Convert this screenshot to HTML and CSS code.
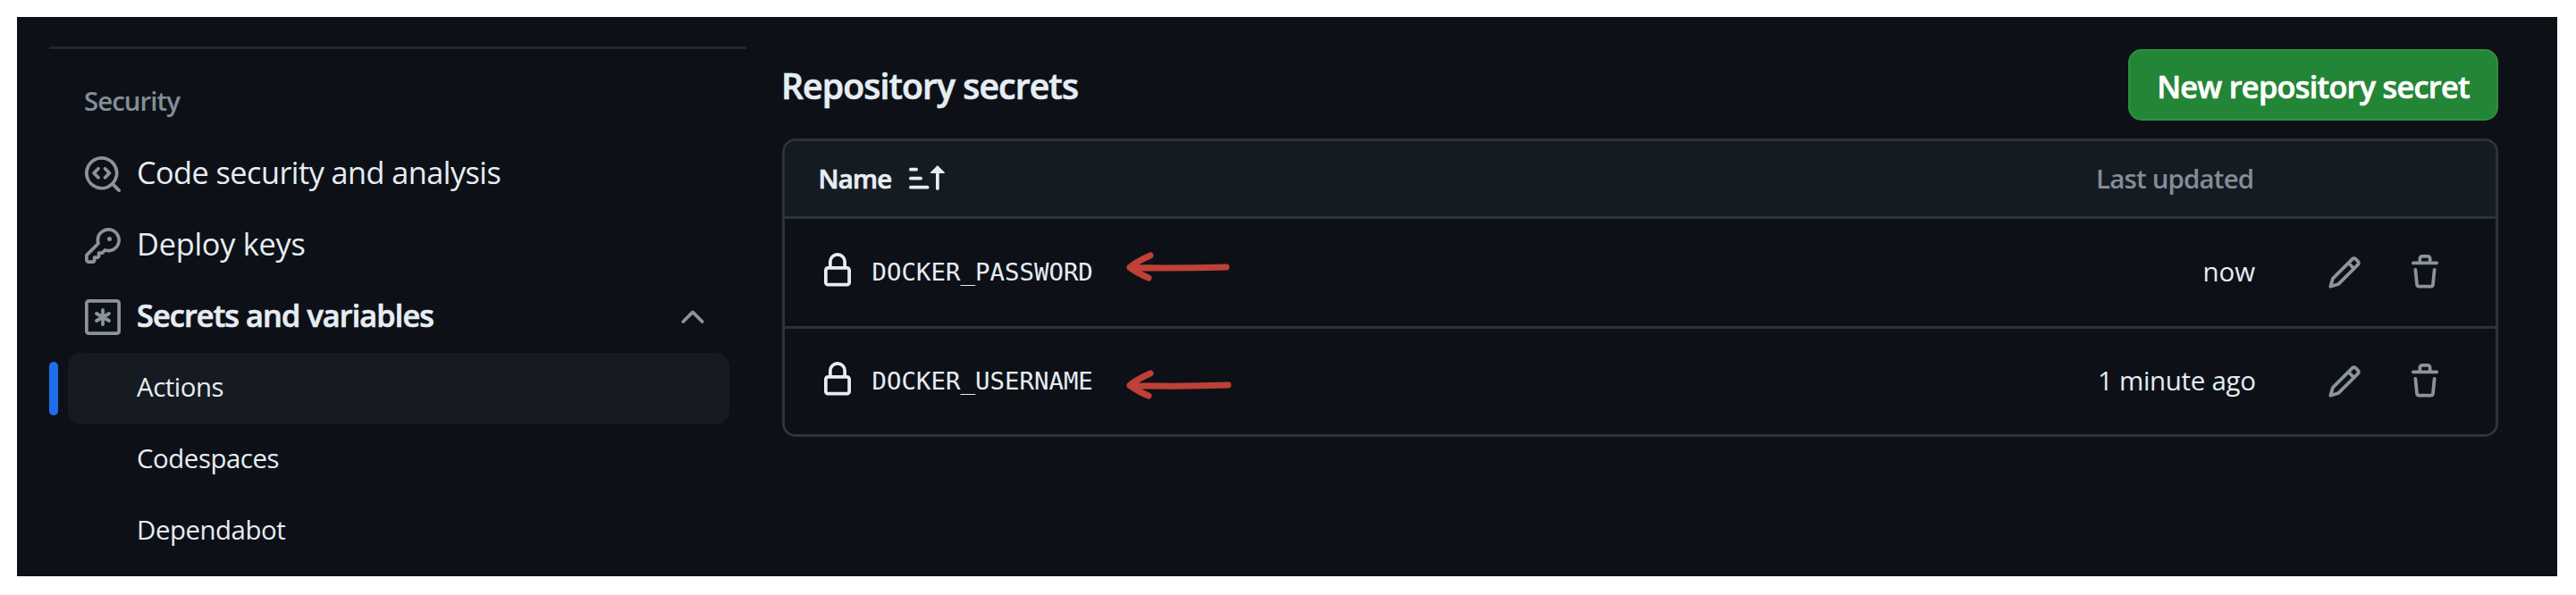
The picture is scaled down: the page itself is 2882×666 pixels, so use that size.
FILE: index.html
```html
<!DOCTYPE html>
<html lang="en">
<head>
<meta charset="utf-8">
<title>Actions secrets</title>
<link rel="stylesheet" href="styles.css">
</head>
<body>
<svg class="sprite" aria-hidden="true">
  <symbol id="codescan" viewBox="0 0 16 16"><path d="M8.47 4.97a.75.75 0 0 0 0 1.06L9.94 7.5 8.47 8.97a.75.75 0 1 0 1.06 1.06l2-2a.75.75 0 0 0 0-1.06l-2-2a.75.75 0 0 0-1.06 0ZM6.53 6.03a.75.75 0 0 0-1.06-1.06l-2 2a.75.75 0 0 0 0 1.06l2 2a.75.75 0 1 0 1.06-1.06L5.06 7.5l1.47-1.47Z"/><path d="M12.246 13.307a7.501 7.501 0 1 1 1.06-1.06l2.474 2.473a.749.749 0 1 1-1.06 1.06l-2.474-2.473ZM1.5 7.5a6.002 6.002 0 0 0 3.608 5.504 6.002 6.002 0 0 0 6.486-1.117.748.748 0 0 1 .292-.293A6 6 0 1 0 1.5 7.5Z"/></symbol>
  <symbol id="key" viewBox="0 0 16 16"><path d="M10.5 0a5.499 5.499 0 1 1-1.288 10.848l-.932.932a.749.749 0 0 1-.53.22H7v.75a.749.749 0 0 1-.22.53l-.5.5a.749.749 0 0 1-.53.22H5v.75a.749.749 0 0 1-.22.53l-.5.5a.749.749 0 0 1-.53.22h-2A1.75 1.75 0 0 1 0 14.25v-2c0-.199.079-.389.22-.53l4.932-4.932A5.5 5.5 0 0 1 10.5 0Zm-4 5.5c-.001.431.069.86.205 1.269a.75.75 0 0 1-.181.768L1.5 12.56v1.69c0 .138.112.25.25.25h1.69l.06-.06v-1.19a.75.75 0 0 1 .75-.75h1.19l.06-.06v-1.19a.75.75 0 0 1 .75-.75h1.19l1.023-1.025a.75.75 0 0 1 .768-.18A4 4 0 1 0 6.5 5.5ZM11 6a1 1 0 1 1 0-2 1 1 0 0 1 0 2Z"/></symbol>
  <symbol id="asterisk" viewBox="0 0 16 16"><g fill="none" stroke="currentColor" stroke-width="1.5"><rect x=".75" y=".75" width="14.5" height="14.5" rx="1"/><path stroke-linecap="round" d="M8 4.75v6.5M5.2 6.4l5.6 3.2M10.8 6.4 5.2 9.6"/></g></symbol>
  <symbol id="chevron" viewBox="0 0 16 16"><path d="M3.22 10.53a.749.749 0 0 1 0-1.06l4.25-4.25a.749.749 0 0 1 1.06 0l4.25 4.25a.749.749 0 1 1-1.06 1.06L8 6.811 4.28 10.53a.749.749 0 0 1-1.06 0Z"/></symbol>
  <symbol id="sort" viewBox="0 0 16 16"><path d="m12.927 2.573 3 3A.25.25 0 0 1 15.75 6H13.5v6.75a.75.75 0 0 1-1.5 0V6H9.75a.25.25 0 0 1-.177-.427l3-3a.25.25 0 0 1 .354 0ZM0 12.25a.75.75 0 0 1 .75-.75h7.5a.75.75 0 0 1 0 1.5H.75a.75.75 0 0 1-.75-.75Zm0-4a.75.75 0 0 1 .75-.75h4.5a.75.75 0 0 1 0 1.5H.75A.75.75 0 0 1 0 8.25Zm0-4a.75.75 0 0 1 .75-.75h2.5a.75.75 0 0 1 0 1.5H.75A.75.75 0 0 1 0 4.25Z"/></symbol>
  <symbol id="lock" viewBox="0 0 16 16"><path d="M4 4a4 4 0 0 1 8 0v2h.25c.966 0 1.75.784 1.75 1.75v5.5A1.75 1.75 0 0 1 12.25 15h-8.5A1.75 1.75 0 0 1 2 13.25v-5.5C2 6.784 2.784 6 3.75 6H4Zm8.25 3.5h-8.5a.25.25 0 0 0-.25.25v5.5c0 .138.112.25.25.25h8.5a.25.25 0 0 0 .25-.25v-5.5a.25.25 0 0 0-.25-.25ZM10.5 6V4a2.5 2.5 0 1 0-5 0v2Z"/></symbol>
  <symbol id="pencil" viewBox="0 0 16 16"><path d="M11.013 1.427a1.75 1.75 0 0 1 2.474 0l1.086 1.086a1.75 1.75 0 0 1 0 2.474l-8.61 8.61c-.21.21-.47.364-.756.445l-3.251.93a.75.75 0 0 1-.927-.928l.929-3.25c.081-.286.235-.547.445-.758l8.61-8.61Zm.176 4.823L9.75 4.81l-6.286 6.287a.253.253 0 0 0-.064.108l-.558 1.953 1.953-.558a.253.253 0 0 0 .108-.064Zm1.238-3.763a.25.25 0 0 0-.354 0L10.811 3.75l1.439 1.44 1.263-1.263a.25.25 0 0 0 0-.354Z"/></symbol>
  <symbol id="trash" viewBox="0 0 16 16"><path d="M11 1.75V3h2.25a.75.75 0 0 1 0 1.5H2.75a.75.75 0 0 1 0-1.5H5V1.75C5 .784 5.784 0 6.75 0h2.5C10.216 0 11 .784 11 1.75ZM4.496 6.675l.66 6.6a.25.25 0 0 0 .249.225h5.19a.25.25 0 0 0 .249-.225l.66-6.6a.75.75 0 0 1 1.492.149l-.66 6.6A1.748 1.748 0 0 1 10.595 15h-5.19a1.75 1.75 0 0 1-1.741-1.575l-.66-6.6a.75.75 0 1 1 1.492-.15ZM6.5 1.75V3h3V1.75a.25.25 0 0 0-.25-.25h-2.5a.25.25 0 0 0-.25.25Z"/></symbol>
</svg>
<div class="panel">
  <nav class="sidebar">
    <h3 class="group-title">Security</h3>
    <a class="item"><svg class="icon"><use href="#codescan"/></svg><span class="label codesec">Code security and analysis</span></a>
    <a class="item"><svg class="icon"><use href="#key"/></svg><span class="label deploy">Deploy keys</span></a>
    <a class="item open"><svg class="icon"><use href="#asterisk"/></svg><span class="label">Secrets and variables</span><svg class="icon"><use href="#chevron"/></svg></a>
    <a class="item sub current"><span class="label">Actions</span></a>
    <a class="item sub"><span class="label">Codespaces</span></a>
    <a class="item sub"><span class="label">Dependabot</span></a>
  </nav>
  <main class="main">
    <header class="head">
      <h2 class="title">Repository secrets</h2>
      <button class="new">New repository secret</button>
    </header>
    <section class="table">
      <div class="row thead">
        <span class="name">Name</span><svg class="icon sort"><use href="#sort"/></svg>
        <span class="time updated">Last updated</span>
      </div>
      <div class="row">
        <svg class="icon lock"><use href="#lock"/></svg><code class="secret">DOCKER_PASSWORD</code>
        <svg class="arrow" viewBox="0 0 124 40"><path d="M30 9Q12 17 7 22.5Q12 27 28 34M7 22.5Q50 23.5 115 22"/></svg>
        <span class="time now">now</span>
        <svg class="icon edit"><use href="#pencil"/></svg><svg class="icon del"><use href="#trash"/></svg>
      </div>
      <div class="row">
        <svg class="icon lock"><use href="#lock"/></svg><code class="secret">DOCKER_USERNAME</code>
        <svg class="arrow lower" viewBox="0 0 124 40"><path d="M30 9Q12 17 7 22.5Q12 27 28 34M7 22.5Q60 24 117 22"/></svg>
        <span class="time">1 minute ago</span>
        <svg class="icon edit"><use href="#pencil"/></svg><svg class="icon del"><use href="#trash"/></svg>
      </div>
    </section>
  </main>
</div>
</body>
</html>
```
FILE: styles.css
```css
* { box-sizing: border-box; }

body {
  margin: 0;
  padding: 19px 21px 21px 19px;
  background: #fff;
  font-family: "Open Sans", "Noto Sans", sans-serif;
  color: #e6edf3;
}

.sprite { display: none; }

.panel {
  display: flex;
  gap: 40px;
  height: 626px;
  padding: 33px 66px 0 36px;
  background: #0d1117;
}

.icon {
  flex: none;
  width: 40px;
  height: 40px;
  fill: currentColor;
  color: #8b949e;
}

/* Sidebar */
.sidebar {
  width: 780px;
  border-top: 3px solid #20262d;
}

.group-title {
  margin: 0;
  height: 100px;
  padding: 38px 0 0 39px;
  font-size: 29.4px;
  line-height: 40px;
  font-weight: 600;
  letter-spacing: -.94px;
  color: #848d97;
}

.item {
  position: relative;
  display: flex;
  align-items: center;
  gap: 18px;
  width: 740px;
  height: 80px;
  margin: 0 0 0 20.5px;
  padding: 0 21px 1px 19.5px;
  border-radius: 15px;
  white-space: nowrap;
}

.label {
  flex: 1;
  padding-bottom: 3px;
  font-size: 34.3px;
  line-height: 48px;
}

.codesec { letter-spacing: -.56px; }
.deploy { letter-spacing: -.25px; }
.open .label { font-weight: 600; letter-spacing: -.91px; }

.sub { padding-left: 77.5px; }
.sub .label { font-size: 29.4px; letter-spacing: -.45px; }

.current { background: #161b22; }
.current::before {
  content: "";
  position: absolute;
  left: -20.5px;
  top: 10px;
  width: 10px;
  height: 60px;
  border-radius: 5px;
  background: #1f6feb;
}

/* Main column */
.main { width: 1920px; padding-top: 3px; }

.head {
  display: flex;
  justify-content: space-between;
  height: 100px;
}

.title {
  margin: 0 0 0 -1px;
  padding-top: 13px;
  font-size: 39.2px;
  line-height: 56px;
  font-weight: 600;
  letter-spacing: -.92px;
}

.title, .open .label, .name, .new { -webkit-text-stroke: .7px currentColor; }

.new {
  width: 414px;
  height: 80px;
  padding: 4px 0 0;
  border: 2px solid #2f8f42;
  border-radius: 15px;
  background: #238636;
  color: #fff;
  font: 600 34.3px/48px "Open Sans", "Noto Sans", sans-serif;
  letter-spacing: -.72px;
}

.table {
  border: 3px solid #2c333b;
  border-radius: 15px;
  overflow: hidden;
}

.row {
  display: flex;
  align-items: center;
  height: 123px;
  border-bottom: 3px solid #2c333b;
  padding: 0 59px 0 38.5px;
  font-size: 29.4px;
  line-height: 40px;
  white-space: nowrap;
}

.row:last-child { height: 118px; border-bottom: 0; }

.thead {
  height: 87px;
  background: #151b22;
  font-weight: 600;
}

.name { width: 81px; margin-left: -1px; padding-bottom: 1px; letter-spacing: -.8px; }
.sort { margin: -2px 0 0 20.5px; color: #e6edf3; }

.time {
  width: 176px;
  margin-left: auto;
  padding-bottom: 3px;
  letter-spacing: -.25px;
  text-align: right;
}

.updated {
  margin-right: 212px;
  padding-bottom: 1px;
  letter-spacing: -.79px;
  color: #848d97;
}

.now { letter-spacing: 0; }

.lock { margin-top: -4px; color: #e6edf3; }

.secret {
  width: 250px;
  margin-left: 19px;
  font-family: "DejaVu Sans Mono", monospace;
  font-size: 27.4px;
}

.arrow {
  width: 124px;
  height: 40px;
  margin: -17px 0 0 31px;
  fill: none;
  stroke: #bf4038;
  stroke-width: 7;
  stroke-linecap: round;
  stroke-linejoin: round;
}

.lower { margin-top: 4px; }

.edit { margin-left: 80px; color: #8b949e; }
.del { margin-left: 50px; }
```
